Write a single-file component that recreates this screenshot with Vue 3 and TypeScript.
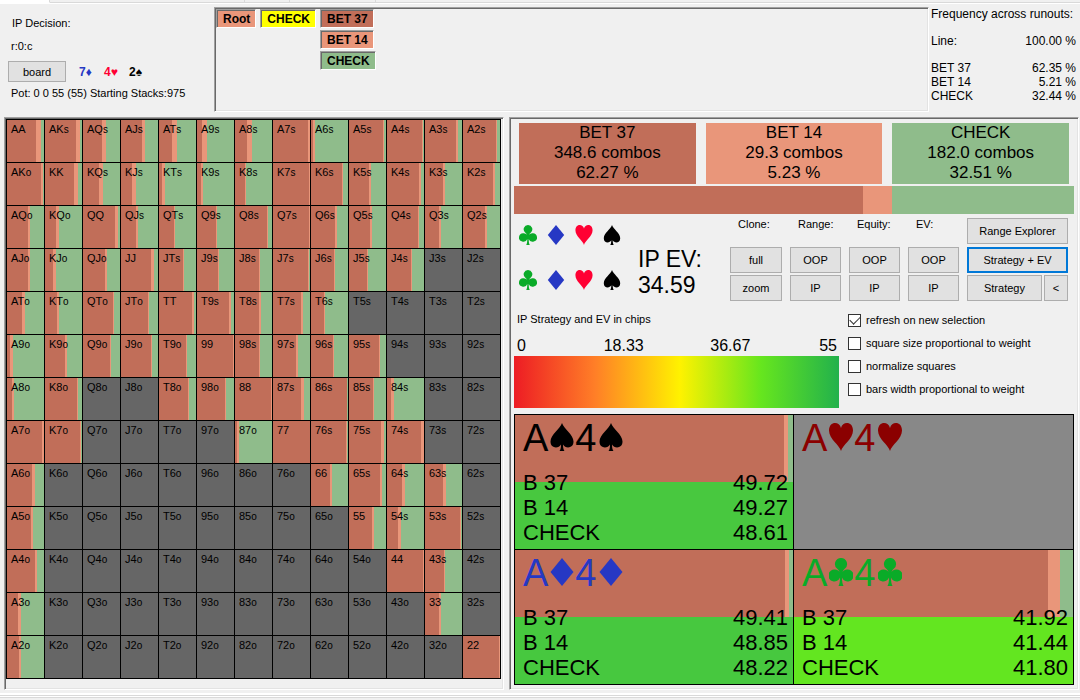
<script setup lang="ts">
import { reactive } from 'vue'

type Split = [number, number] | null
type Suit = 'club' | 'diamond' | 'heart' | 'spade'

const ranks = 'AKQJT98765432'
const CELL_UNITS = 37
const n: Split = null

// Each entry holds the BET 37 and BET 14 shares of a square; the rest is CHECK.
const splits: Split[][] = [
  [[29, 5], [31, 4], [19, 4], [21, 3], [13, 5], [5, 5], [12, 5], [35, 2], [2, 2], [34, 1], [35, 1], [31, 2], [33, 1]],
  [[34, 2], [29, 4], [16, 4], [11, 4], [3, 3], [4, 2], [10, 1], [36, 1], [31, 1], [20, 2], [32, 2], [18, 2], [30, 2]],
  [[21, 2], [11, 3], [32, 3], [15, 2], [15, 1], [19, 1], [32, 1], [36, 1], [24, 2], [21, 2], [31, 1], [14, 2], [22, 2]],
  [[21, 2], [8, 3], [22, 2], [30, 3], [24, 1], [21, 1], [24, 1], [35, 1], [23, 1], [18, 1], [24, 1], n, n],
  [[15, 3], [12, 2], [30, 1], [27, 1], [33, 2], [32, 2], [24, 2], [28, 2], [13, 1], n, n, n, n],
  [[3, 3], [20, 2], [27, 1], [30, 1], [27, 1], [36, 1], [24, 1], [23, 2], [22, 1], [30, 1], n, n, n],
  [[5, 2], [32, 1], n, n, [29, 1], [28, 1], [36, 1], [28, 3], [36, 0], [24, 1], [4, 3], n, n],
  [[35, 2], [35, 1], n, n, n, n, [2, 2], [37, 0], [35, 1], [32, 3], [34, 3], n, n],
  [[25, 3], n, n, n, n, n, n, n, [19, 2], [31, 2], [15, 3], [18, 3], n],
  [[24, 2], n, n, n, n, n, n, n, n, [23, 2], [11, 3], [35, 1], n],
  [[28, 2], n, n, n, n, n, n, n, n, n, [36, 1], [19, 1], n],
  [[11, 3], n, n, n, n, n, n, n, n, n, n, [14, 2], n],
  [[12, 2], n, n, n, n, n, n, n, n, n, n, n, [36, 1]],
]

const RAISE = '#c16e59'
const SMALL = '#e9967a'
const CHECK = '#8fbc8b'

function stripes(a: number, b: number, total: number): string {
  const first = (a / total) * 100
  const second = ((a + b) / total) * 100
  return `linear-gradient(to right, ${RAISE} ${first}%, ${SMALL} ${first}% ${second}%, ${CHECK} ${second}%)`
}

const cells = splits.flatMap((row, r) =>
  row.map((split, c) => ({
    pair: r <= c ? ranks[r] + ranks[c] : ranks[c] + ranks[r],
    suffix: r === c ? '' : r < c ? 's' : 'o',
    style: split ? { background: stripes(split[0], split[1], CELL_UNITS) } : {},
  })),
)

const actions = [
  { name: 'BET 37', combos: '348.6 combos', share: 62.27, text: '62.27 %', cls: 'raise' },
  { name: 'BET 14', combos: '29.3 combos', share: 5.23, text: '5.23 %', cls: 'small' },
  { name: 'CHECK', combos: '182.0 combos', share: 32.51, text: '32.51 %', cls: 'check' },
]

const suitRows: Suit[][] = [
  ['club', 'diamond', 'heart', 'spade'],
  ['club', 'diamond', 'heart', 'spade'],
]

const suitPaths: Record<Suit, string> = {
  spade:
    'M12 0C13.500 5.500 23.500 11.500 23.500 18.500C23.500 25.500 15.500 26 13 21.500C13 24.500 13.500 27 14.500 28H9.500C10.500 27 11 24.500 11 21.500C8.500 26 .5 25.500 .5 18.500C.5 11.500 10.500 5.500 12 0Z',
  heart: 'M12 28C10.500 22 0 16 0 7.500C0 -2 10.500 -2 12 5C13.500 -2 24 -2 24 7.500C24 16 13.500 22 12 28Z',
  diamond: 'M12 0L23.500 14L12 28L.5 14Z',
  club:
    'M12 0A6 6 0 0 1 16 10.500C15 11.500 14 12.500 13.500 14C14.500 12.500 16 11.500 18 11.500A6 6 0 1 1 13 19.500C13 23.500 13.500 26.500 14.500 28H9.500C10.500 26.500 11 23.500 11 19.500A6 6 0 1 1 6 11.500C8 11.500 9.500 12.500 10.500 14C10 12.500 9 11.500 8 10.500A6 6 0 0 1 12 0Z',
}

const combos: { suit: Suit; split: [number, number, number] | null; ev: string; rows: [string, string][] }[] = [
  { suit: 'spade', split: [269, 4, 278], ev: '#48c83f', rows: [['B 37', '49.72'], ['B 14', '49.27'], ['CHECK', '48.61']] },
  { suit: 'heart', split: null, ev: '', rows: [] },
  { suit: 'diamond', split: [270, 4, 278], ev: '#47c83f', rows: [['B 37', '49.41'], ['B 14', '48.85'], ['CHECK', '48.22']] },
  { suit: 'club', split: [254, 12, 279], ev: '#63e620', rows: [['B 37', '41.92'], ['B 14', '41.44'], ['CHECK', '41.80']] },
]

const options = reactive([
  { id: 'refresh', label: 'refresh on new selection', on: true },
  { id: 'square', label: 'square size proportional to weight', on: false },
  { id: 'normalize', label: 'normalize squares', on: false },
  { id: 'bars', label: 'bars width proportional to weight', on: false },
])
</script>

<template>
  <div class="page">
    <div class="tabs"><i class="active"></i><i class="t1"></i><i class="t2"></i><i class="t3"></i><i class="rest"></i></div>

    <header class="top">
      <section class="decision">
        <div class="line">IP Decision:</div>
        <div class="line path">r:0:c</div>
        <div class="board">
          <button class="btn" type="button">board</button>
          <span class="diamond">7♦</span><span class="heart">4♥</span><span class="spade">2♠</span>
        </div>
        <div class="line pot">Pot: 0 0 55 (55) Starting Stacks:975</div>
      </section>

      <nav class="tree sunken">
        <div><button class="node small" type="button">Root</button></div>
        <div><button class="node current" type="button">CHECK</button></div>
        <div>
          <button class="node raise" type="button">BET 37</button>
          <button class="node small" type="button">BET 14</button>
          <button class="node check" type="button">CHECK</button>
        </div>
      </nav>

      <section class="freq">
        <div>Frequency across runouts:</div>
        <div class="gap"><span>Line:</span><span>100.00 %</span></div>
        <div class="gap"><span>BET 37</span><span>62.35 %</span></div>
        <div><span>BET 14</span><span>5.21 %</span></div>
        <div><span>CHECK</span><span>32.44 %</span></div>
      </section>
    </header>

    <main class="main">
      <section class="sunken range">
        <div class="matrix">
          <button v-for="cell in cells" :key="cell.pair + cell.suffix" type="button" class="cell" :style="cell.style">{{ cell.pair }}<small>{{ cell.suffix }}</small></button>
        </div>
      </section>

      <section class="sunken details">
        <div class="actions">
          <div v-for="a in actions" :key="a.name" class="action" :class="a.cls">
            <div>{{ a.name }}</div>
            <div>{{ a.combos }}</div>
            <div>{{ a.text }}</div>
          </div>
        </div>
        <div class="bar">
          <i v-for="a in actions" :key="a.name" :class="a.cls" :style="{ flexGrow: a.share }"></i>
        </div>

        <div class="controls">
          <div class="suits">
            <template v-for="(row, i) in suitRows" :key="i">
              <button v-for="s in row" :key="s" type="button" :class="s" :aria-label="s">
                <svg viewBox="0 0 24 28"><path :d="suitPaths[s]" fill="currentColor" /></svg>
              </button>
            </template>
          </div>
          <div class="ev"><div>IP EV:</div><div>34.59</div></div>
          <div class="buttons">
            <span>Clone:</span><span>Range:</span><span>Equity:</span><span>EV:</span>
            <button class="btn" type="button">Range Explorer</button>
            <button class="btn" type="button">full</button>
            <button class="btn" type="button">OOP</button>
            <button class="btn" type="button">OOP</button>
            <button class="btn" type="button">OOP</button>
            <button class="btn selected" type="button">Strategy + EV</button>
            <button class="btn" type="button">zoom</button>
            <button class="btn" type="button">IP</button>
            <button class="btn" type="button">IP</button>
            <button class="btn" type="button">IP</button>
            <div class="pair">
              <button class="btn wide" type="button">Strategy</button>
              <button class="btn" type="button">&lt;</button>
            </div>
          </div>
        </div>

        <div class="lower">
          <div>
            <div class="caption">IP Strategy and EV in chips</div>
            <div class="scale"><span>0</span><span>18.33</span><span>36.67</span><span>55</span></div>
            <div class="gradient"></div>
          </div>
          <div class="options">
            <label v-for="o in options" :key="o.id" :for="o.id">
              <input :id="o.id" v-model="o.on" type="checkbox" />{{ o.label }}
            </label>
          </div>
        </div>

        <div class="combos">
          <div v-for="c in combos" :key="c.suit" class="combo" :style="{ background: c.split ? c.ev : undefined }">
            <div class="half" :style="{ background: c.split ? stripes(c.split[0], c.split[1], c.split[2]) : undefined }">
              <div class="hand" :class="[c.suit, { dead: !c.split }]">
                A<svg viewBox="0 0 24 28"><path :d="suitPaths[c.suit]" fill="currentColor" /></svg>4<svg viewBox="0 0 24 28"><path :d="suitPaths[c.suit]" fill="currentColor" /></svg>
              </div>
            </div>
            <div class="values">
              <div v-for="row in c.rows" :key="row[0]"><span>{{ row[0] }}</span><span>{{ row[1] }}</span></div>
            </div>
          </div>
        </div>
      </section>
    </main>

    <footer class="foot"><i></i></footer>
  </div>
</template>

<style>
body {
  margin: 0;
  background: #f0f0f0;
}
</style>

<style scoped>
.page {
  font-family: 'Liberation Sans', Arial, sans-serif;
  font-size: 11px;
  line-height: 14px;
  color: #000;
  background: #f0f0f0;
}
.page * {
  box-sizing: border-box;
}
button {
  font: inherit;
  color: inherit;
  padding: 0;
  margin: 0;
}
.raise { background: #c16e59; }
.small { background: #e9967a; }
.check { background: #8fbc8b; }
.diamond { color: #2638c4; }
.heart { color: #ff0033; }
.spade { color: #000; }
.club { color: #0aab28; }

.sunken {
  padding: 1px;
  border: 1px solid;
  border-color: #a0a0a0 #fff #fff #a0a0a0;
  box-shadow: inset 1px 1px 0 #696969, inset -1px -1px 0 #e3e3e3;
}
.tabs {
  display: flex;
  height: 4px;
  border-bottom: 1px solid #fff;
}
.tabs i {
  border-right: 1px solid #d9d9d9;
  border-bottom: 1px solid #d9d9d9;
}
.tabs .active { width: 50px; background: #fff; border-bottom-color: #fff; }
.tabs .t1 { width: 195px; }
.tabs .t2 { width: 45px; }
.tabs .t3 { width: 86px; }
.tabs .rest { flex: 1; border-right: 0; }

.top {
  display: flex;
  height: 113px;
  padding: 3px 4px 5px 8px;
}
.decision { width: 206px; padding-top: 9px; }
.line { padding-left: 4px; white-space: nowrap; }
.path { margin-top: 9px; padding-left: 3px; }
.pot { margin-top: 4px; padding-left: 3px; }
.board {
  display: flex;
  align-items: center;
  margin-top: 8px;
  font-size: 12px;
  font-weight: bold;
}
.board .btn {
  width: 58px;
  height: 21px;
  margin-right: 13px;
  font-weight: normal;
  font-size: 11px;
}
.board span { width: 25px; }
.btn {
  border: 1px solid #adadad;
  background: #e1e1e1;
}
.selected { border: 2px solid #0078d7; }

.tree {
  flex: 1;
  display: flex;
  align-items: flex-start;
  gap: 4px;
}
.tree > div {
  display: flex;
  flex-direction: column;
  align-items: flex-start;
  gap: 2px;
}
.node {
  height: 19px;
  padding: 0 5px 0 6px;
  border: 1px solid;
  border-color: #a0a0a0 #fff #fff #a0a0a0;
  box-shadow: inset 1px 1px 0 #696969;
  font-size: 12px;
  font-weight: bold;
  line-height: 14px;
}
.current { background: #ff0; }

.freq { width: 147px; padding-left: 2px; font-size: 12px; white-space: nowrap; }
.freq div { display: flex; justify-content: space-between; }
.freq .gap { margin-top: 13px; }

.main {
  display: grid;
  grid-template-columns: 500fr 570fr;
  gap: 5px;
  padding: 0 1px 0 4px;
}
.range { padding-right: 2px; padding-bottom: 2px; }
.matrix {
  display: grid;
  grid-template-columns: repeat(13, 1fr);
  grid-auto-rows: 42px;
  gap: 1px;
  padding: 1px;
  background: #000;
}
.cell {
  display: flex;
  align-items: baseline;
  min-width: 0;
  padding: 2px 0 0 4px;
  border: 0;
  background: #666;
}
.cell small { background: none; font-size: 10px; }

.details { padding: 5px 4px 4px; }
.actions {
  display: grid;
  grid-template-columns: repeat(3, 1fr);
  gap: 10px;
  padding: 0 5px;
}
.action {
  height: 61px;
  font-size: 17px;
  line-height: 20px;
  text-align: center;
}
.bar { display: flex; height: 28px; margin-top: 2px; }
.bar i { flex: 0 1 0; }

.controls { display: flex; padding-right: 6px; }
.suits {
  display: grid;
  grid-template-columns: repeat(4, 28px);
  grid-auto-rows: 45px;
}
.suits button {
  display: grid;
  place-items: center;
  padding-bottom: 3px;
  border: 0;
  background: none;
}
.suits svg { width: 18px; height: 20px; }
.ev {
  margin: 32px 0 0 12px;
  font-size: 23px;
  line-height: 26px;
  white-space: nowrap;
}
.buttons {
  display: grid;
  grid-template-columns: 52px 51px 51px 51px 101px;
  grid-template-rows: 27px 26px 26px;
  gap: 2px 8px;
  margin: 4px 0 0 auto;
  align-content: start;
}
.buttons span { padding-left: 8px; line-height: 12px; }
.buttons .btn { height: 26px; white-space: nowrap; }
.pair { display: flex; gap: 2px; }
.pair .btn { flex: 23; }
.pair .wide { flex: 76; }

.lower {
  display: grid;
  grid-template-columns: 325fr 226fr;
  gap: 9px;
  padding-top: 8px;
}
.caption { padding-left: 3px; }
.scale {
  display: grid;
  grid-template-columns: 1fr 2fr 2fr 1fr;
  margin-top: 11px;
  padding: 0 2px 0 3px;
  font-size: 16px;
  line-height: 18px;
  text-align: center;
}
.scale span:first-child { text-align: left; }
.scale span:last-child { text-align: right; }
.gradient {
  height: 52px;
  margin-top: 1px;
  background: linear-gradient(to right, #ed1c24, #ff7f27 25%, #fff200 51%, #66e61e 76%, #22b14c);
}
.options { display: flex; flex-direction: column; gap: 9px; padding-top: 1px; }
.options label { display: flex; align-items: center; gap: 5px; height: 14px; white-space: nowrap; }
.options input {
  appearance: none;
  display: grid;
  place-items: center;
  width: 13px;
  height: 13px;
  margin: 0;
  border: 1px solid #333;
  background: #fff;
}
.options input:checked::after {
  content: '';
  width: 9px;
  height: 5px;
  margin-bottom: 3px;
  border: solid #333;
  border-width: 0 0 1px 1px;
  transform: rotate(-45deg);
}

.combos {
  display: grid;
  grid-template-columns: 278fr 279fr;
  gap: 1px;
  margin-top: 6px;
  padding: 1px;
  background: #000;
}
.combo {
  display: grid;
  grid-template-rows: 67px 67px;
  background: #888;
}
.half { padding: 2px 8px; }
.hand {
  display: flex;
  align-items: center;
  font-size: 38px;
  line-height: 42px;
}
.hand svg { width: 24px; height: 28px; margin: 0 1px 2px 2px; }
.dead { color: #8b0000; }
.values {
  align-self: end;
  padding: 0 5px 4px 8px;
  font-size: 22px;
  line-height: 25px;
}
.values div { display: flex; justify-content: space-between; }

.foot { padding-top: 3px; }
.foot i {
  display: block;
  height: 5px;
  border: solid #d9d9d9;
  border-width: 1px 0;
  border-top: 2px solid #fff;
  box-shadow: inset 0 1px 0 #d9d9d9, inset 0 2px 0 #fff;
}
</style>
